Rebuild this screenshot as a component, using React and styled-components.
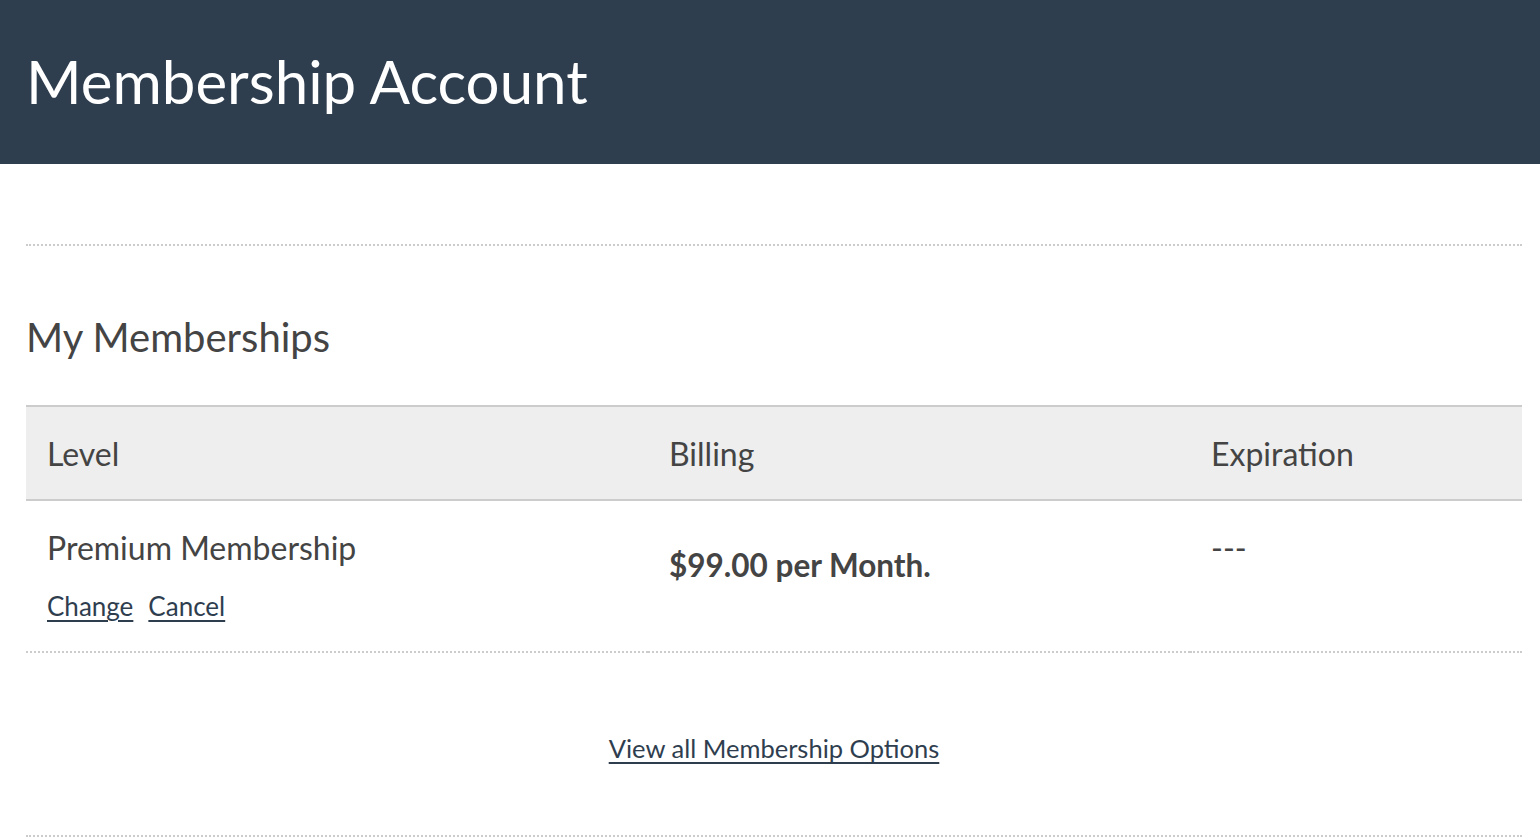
import { createGlobalStyle, styled } from "styled-components";

const GlobalStyle = createGlobalStyle`
  body {
    margin: 0;
    font-family: Lato, "Open Sans", sans-serif;
    color: #444;
    background: #fff;
  }
`;

const Header = styled.header`
  background: #2f3e4f;
  height: 164px;
  display: flex;
  align-items: center;
  padding: 0 26px;
`;

const Title = styled.h1`
  margin: 0;
  color: #fff;
  font-size: 60px;
  font-weight: 400;
  padding-bottom: 3px;
`;

const Content = styled.main`
  padding: 80px 18px 0 26px;
`;

const Divider = styled.hr`
  border: 0;
  border-top: 2px dotted #ccc;
  margin: 0;
`;

const SectionTitle = styled.h2`
  margin: 66px 0 43px;
  font-size: 40px;
  font-weight: 400;
  line-height: 50px;
  color: #444;
`;

const Table = styled.table`
  width: 100%;
  border-collapse: collapse;
  table-layout: fixed;
`;

const HeadCell = styled.th`
  box-sizing: border-box;
  background: #eee;
  border-top: 2px solid #ccc;
  border-bottom: 2px solid #ccc;
  text-align: left;
  font-weight: 400;
  font-size: 32px;
  padding: 0 21px;
  height: 94px;
  width: ${(p) => p.$width || "auto"};
`;

const Cell = styled.td`
  border-bottom: 2px dotted #ccc;
  font-size: ${(p) => (p.$bold ? 31.5 : 32)}px;
  line-height: 36px;
  padding: ${(p) => p.$top || 29}px 21px 25px;
  vertical-align: top;
  font-weight: ${(p) => (p.$bold ? 700 : 400)};
`;

const Actions = styled.div`
  display: flex;
  gap: 15px;
  margin-top: 20px;
  line-height: 40px;
`;

const Link = styled.a`
  color: #2f3e4f;
  font-size: ${(p) => p.$size || 26}px;
  text-decoration: underline;
  text-underline-offset: 4px;
  cursor: pointer;
`;

const Footer = styled.div`
  display: flex;
  justify-content: center;
  padding: 80px 0 72px;
`;

export default function App() {
  return (
    <>
      <GlobalStyle />
      <Header>
        <Title>Membership Account</Title>
      </Header>
      <Content>
        <Divider />
        <SectionTitle>My Memberships</SectionTitle>
        <Table>
          <thead>
            <tr>
              <HeadCell $width="622px">Level</HeadCell>
              <HeadCell $width="542px">Billing</HeadCell>
              <HeadCell>Expiration</HeadCell>
            </tr>
          </thead>
          <tbody>
            <tr>
              <Cell>
                <div>Premium Membership</div>
                <Actions>
                  <Link>Change</Link>
                  <Link>Cancel</Link>
                </Actions>
              </Cell>
              <Cell $top={46} $bold>
                $99.00 per Month.
              </Cell>
              <Cell>---</Cell>
            </tr>
          </tbody>
        </Table>
        <Footer>
          <Link $size={25.5}>View all Membership Options</Link>
        </Footer>
        <Divider />
      </Content>
    </>
  );
}
